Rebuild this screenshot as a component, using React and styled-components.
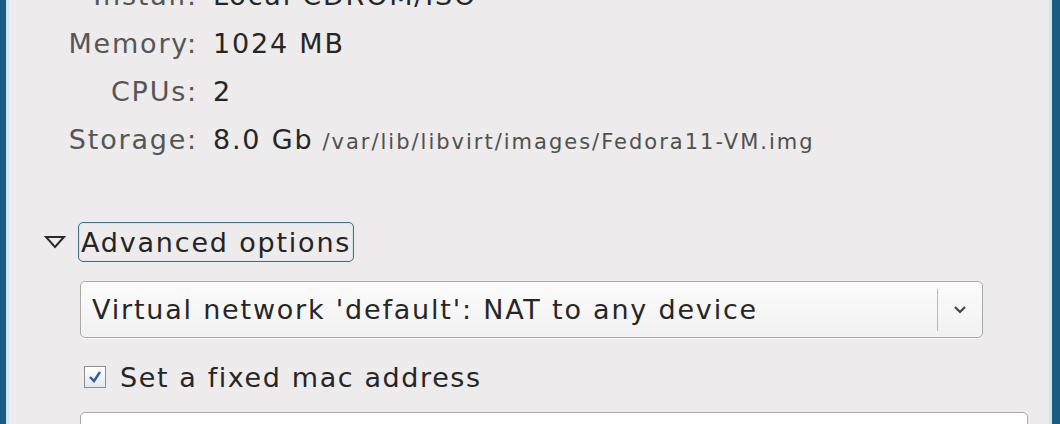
import React from 'react'
import styled, { createGlobalStyle } from 'styled-components'

const GlobalStyle = createGlobalStyle`
  body {
    margin: 0;
    background: #edebeb;
    overflow: hidden;
  }
`

const Frame = styled.div`
  height: 424px;
  display: flex;
  font-family: "DejaVu Sans", sans-serif;
  font-size: 27px;
  letter-spacing: 1.8px;
  background-color: #edebeb;
  overflow: hidden;
`

const Edge = styled.div`
  width: ${p => p.right ? '11px' : '10px'};
  display: flex;
  flex-direction: ${p => p.right ? 'row-reverse' : 'row'};
  flex-shrink: 0;

  &::before {
    content: '';
    width: ${p => p.right ? '8px' : '6px'};
    background-color: #1b5b82;
  }
  &::after {
    content: '';
    width: 3px;
    background-color: #cfe6ee;
  }
`

const Content = styled.div`
  flex: 1;
  display: flex;
  flex-direction: column;
  margin-top: -29px;

  & > * {
    flex-shrink: 0;
  }
`

const Summary = styled.div`
  display: grid;
  grid-template-columns: 188px auto;
  column-gap: 15px;
  grid-auto-rows: 48px;
  align-items: center;
`

const Label = styled.div`
  text-align: right;
  color: #565656;
`

const Value = styled.div`
  color: #262626;
  white-space: nowrap;
`

const Path = styled.span`
  font-size: 21px;
  letter-spacing: 2px;
  color: #505050;
  margin-left: 9px;
`

const Expander = styled.div`
  display: flex;
  align-items: center;
  margin-top: 59px;
  height: 40px;
  padding-left: 34px;
  gap: 12px;
`

const Arrow = styled.svg`
  width: 22px;
  height: 14px;
`

const FocusBox = styled.div`
  height: 38px;
  display: flex;
  align-items: center;
  padding: 0 2px;
  border: 1px solid #4b6f88;
  border-radius: 5px;
  box-shadow: inset 0 0 0 1px #d3e6f0;
  color: #242424;
`

const Combo = styled.div`
  margin: 19px 0 0 70px;
  width: 903px;
  height: 57px;
  box-sizing: border-box;
  display: flex;
  align-items: center;
  border: 1px solid #a9a9a9;
  border-radius: 5px;
  background: linear-gradient(#fcfcfc, #f1f1f1);
  box-shadow: 0 1px 0 #ffffff;
`

const ComboText = styled.div`
  flex: 1;
  padding-left: 11px;
  color: #262626;
  white-space: nowrap;
`

const ComboButton = styled.div`
  width: 44px;
  height: 42px;
  display: flex;
  align-items: center;
  justify-content: center;
  border-left: 1px solid #b9b9b9;
`

const CheckRow = styled.div`
  display: flex;
  align-items: center;
  gap: 14px;
  margin: 28px 0 0 74px;
  height: 22px;
  letter-spacing: 1.6px;
  color: #262626;
`

const CheckBox = styled.div`
  width: 20px;
  height: 20px;
  border: 1px solid #8a8f96;
  background: linear-gradient(#ffffff, #e4e8ef);
  display: flex;
  align-items: center;
  justify-content: center;
`

const Entry = styled.div`
  margin: 24px 0 0 70px;
  width: 946px;
  height: 50px;
  border: 1px solid #a9a9a9;
  border-radius: 5px;
  background: #ffffff;
`

const details = [
  { label: 'Install:', value: 'Local CDROM/ISO' },
  { label: 'Memory:', value: '1024 MB' },
  { label: 'CPUs:', value: '2' },
  { label: 'Storage:', value: '8.0 Gb', path: '/var/lib/libvirt/images/Fedora11-VM.img' }
]

const App = () => {
  return (
    <>
      <GlobalStyle />
      <Frame>
        <Edge />
        <Content>
          <Summary>
            {details.map((item, i) => (
              <React.Fragment key={i}>
                <Label>{item.label}</Label>
                <Value>
                  {item.value}
                  {item.path && <Path>{item.path}</Path>}
                </Value>
              </React.Fragment>
            ))}
          </Summary>
          <Expander>
            <Arrow viewBox="0 0 22 14">
              <path d="M2 2 L20 2 L11 12 Z" fill="none" stroke="#2a2a2a" strokeWidth="2" />
            </Arrow>
            <FocusBox>Advanced options</FocusBox>
          </Expander>
          <Combo>
            <ComboText>Virtual network 'default': NAT to any device</ComboText>
            <ComboButton>
              <svg width="14" height="10" viewBox="0 0 14 10">
                <path d="M2 2 L7 7 L12 2" fill="none" stroke="#444" strokeWidth="2.2" />
              </svg>
            </ComboButton>
          </Combo>
          <CheckRow>
            <CheckBox>
              <svg width="16" height="16" viewBox="0 0 16 16">
                <path d="M3 8 L7 12 L13 3" fill="none" stroke="#2f5f9e" strokeWidth="2.4" />
              </svg>
            </CheckBox>
            Set a fixed mac address
          </CheckRow>
          <Entry />
        </Content>
        <Edge right />
      </Frame>
    </>
  )
}

export default App
